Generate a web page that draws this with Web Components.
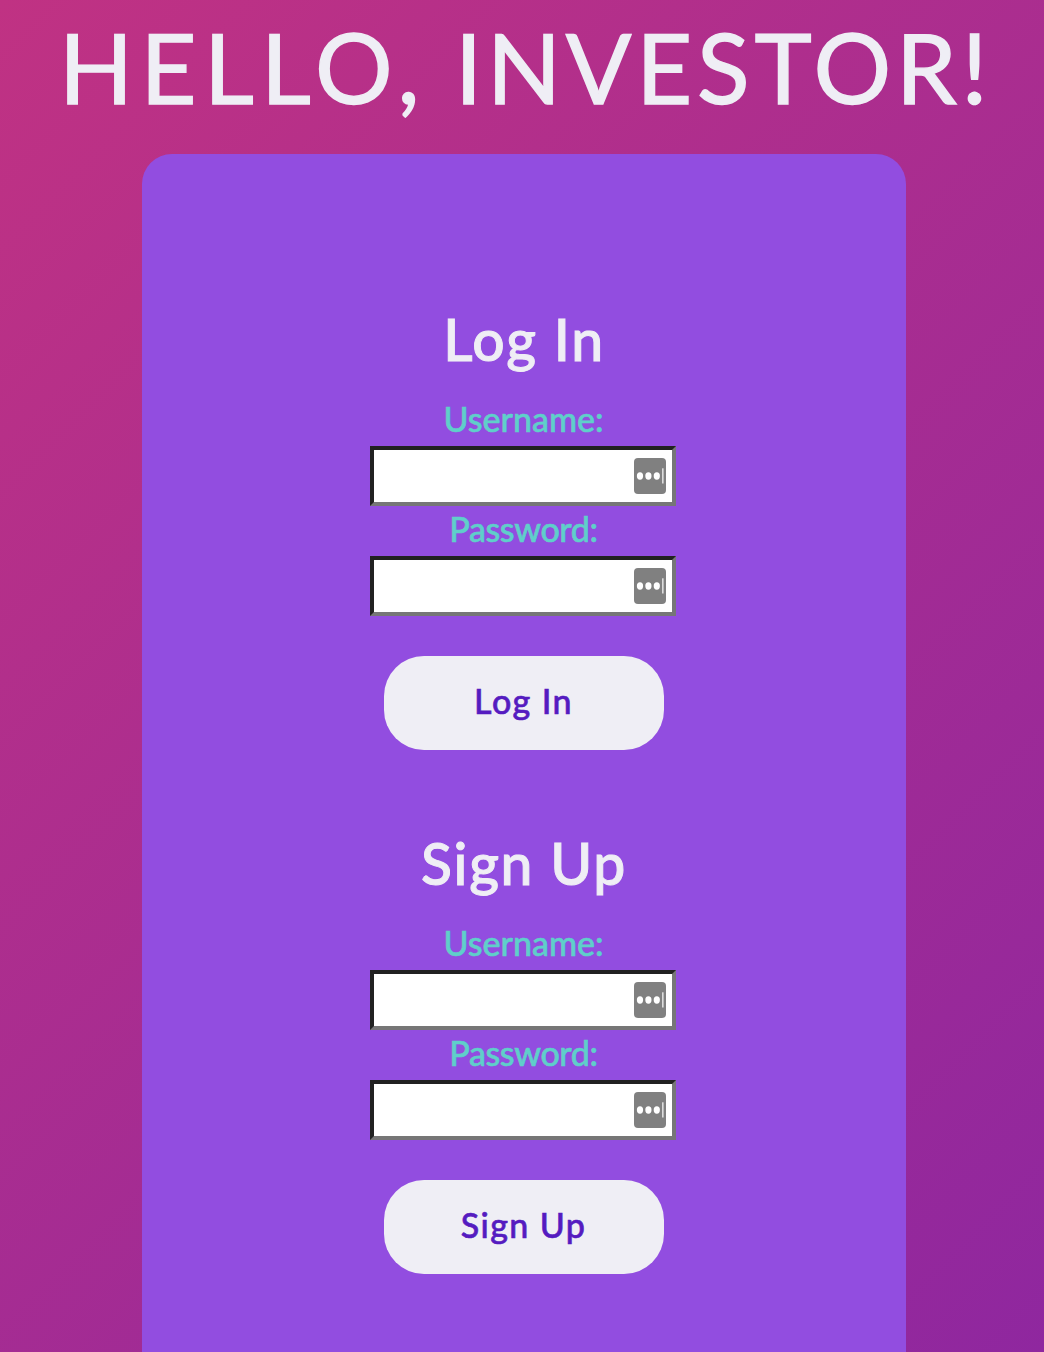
<!DOCTYPE html>
<html lang="en">
<head>
<meta charset="utf-8">
<title>Hello, Investor!</title>
<style>
html,body{margin:0;height:1352px;overflow:hidden}
body{font-family:Lato,"Liberation Sans",sans-serif;background:linear-gradient(135deg,#c03283 0%,#8f279f 100%)}
</style>
</head>
<body>
<investor-page></investor-page>
<script>
const define = (name, html, setup) => customElements.define(name, class extends HTMLElement {
  connectedCallback() {
    if (this.shadowRoot) return;
    const root = this.attachShadow({mode: 'open'});
    const t = document.createElement('template');
    t.innerHTML = html;
    root.append(t.content.cloneNode(true));
    if (setup) setup(this, root);
  }
});

define('page-title', `<style>
:host{display:block;height:154px;color:#efeef5}
h1{margin:0;padding:9px 0 0 59px;display:flex;gap:28px;font-weight:400;font-size:97px;line-height:116px;white-space:nowrap;-webkit-text-stroke:1.4px currentColor}
.a{letter-spacing:7.4px}.b{letter-spacing:4.8px}
</style><h1><span class="a">HELLO,</span><span class="b">INVESTOR!</span></h1>`);

define('key-badge', `<style>
:host{display:block;width:32px;height:36px}svg{display:block}
</style><svg width="32" height="36" viewBox="0 0 32 36"><rect width="32" height="36" rx="4" fill="#808080"/><g fill="#fff"><ellipse cx="6" cy="18" rx="3.1" ry="3.7"/><ellipse cx="14.4" cy="18" rx="3.1" ry="3.7"/><ellipse cx="22.8" cy="18" rx="3.1" ry="3.7"/><rect x="28.2" y="10.3" width="1.3" height="15.2" opacity=".9"/></g></svg>`);

define('form-field', `<style>
:host{display:flex;flex-direction:column;align-items:center;height:110px}
label{height:50px;line-height:45px;font-size:34px;font-weight:500;color:#5fcfca;white-space:nowrap;letter-spacing:var(--track,0);margin-right:1px;-webkit-text-stroke:.6px currentColor}
.input{box-sizing:border-box;width:306px;height:60px;margin-right:2px;border:4px solid;border-color:#212121 #767676 #767676 #212121;background:#fff;display:flex;justify-content:flex-end;align-items:flex-start;padding:8px 6px}
</style><label><slot></slot></label><div class="input"><key-badge></key-badge></div>`);

define('pill-button', `<style>
:host{display:block}
button{display:block;box-sizing:border-box;width:280px;height:94px;border:0;border-radius:40px;padding:0 1px 5px 0;background:#efeef5;color:#551bc0;font:500 34px/89px Lato,sans-serif;letter-spacing:var(--track,0);-webkit-text-stroke:.6px currentColor}
</style><button><slot></slot></button>`);

define('auth-form', `<style>
:host{display:flex;flex-direction:column;align-items:center;height:524px}
h2{margin:0;height:84px;line-height:54px;font-size:57px;font-weight:500;color:#efeef5;white-space:nowrap;letter-spacing:1.7px;-webkit-text-stroke:1px currentColor}
pill-button{margin-top:40px;--track:1.4px}
.u{--track:0}.p{--track:-.4px}
</style><h2></h2><form-field class="u">Username:</form-field><form-field class="p">Password:</form-field><pill-button></pill-button>`, (host, root) => {
  const name = host.getAttribute('name');
  root.querySelector('h2').textContent = name;
  root.querySelector('pill-button').textContent = name;
});

define('auth-card', `<style>
:host{display:block;box-sizing:border-box;width:764px;height:1228px;margin-left:142px;padding-top:158px;background:#924de0;border-radius:30px 30px 0 0}
</style><slot></slot>`);

define('investor-page', `<style>:host{display:block;height:1352px;overflow:hidden}</style>
<page-title></page-title><auth-card><auth-form name="Log In"></auth-form><auth-form name="Sign Up"></auth-form></auth-card>`);
</script>
</body>
</html>
